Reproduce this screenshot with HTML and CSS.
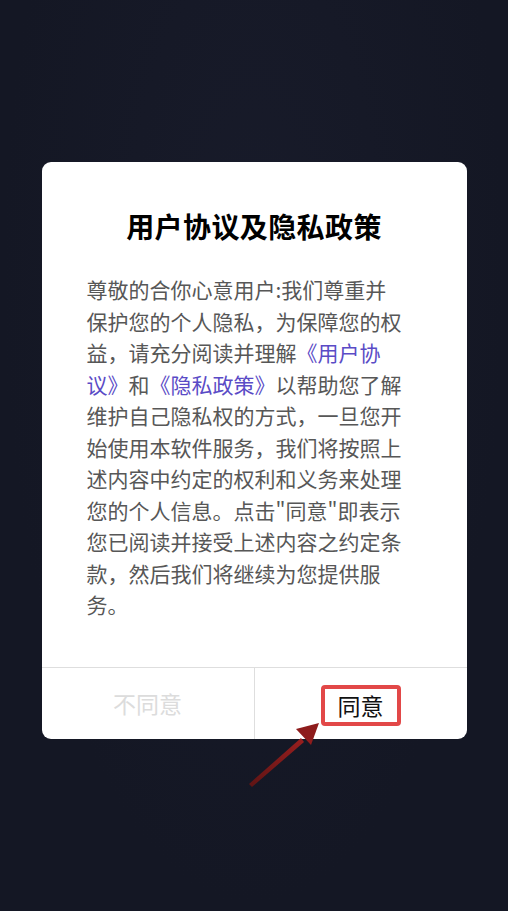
FILE: index.html
```html
<!DOCTYPE html>
<html lang="zh-CN">
<head>
<meta charset="utf-8">
<title>用户协议及隐私政策</title>
<link rel="stylesheet" href="styles.css">
</head>
<body>
<div class="screen">
  <div class="dialog">
    <div class="content">
      <h1 class="title">用户协议及隐私政策</h1>
      <p class="body">尊敬的合你心意用户:我们尊重并<br>保护您的个人隐私，为保障您的权<br>益，请充分阅读并理解<span class="link">《用户协<br>议》</span>和<span class="link">《隐私政策》</span>以帮助您了解<br>维护自己隐私权的方式，一旦您开<br>始使用本软件服务，我们将按照上<br>述内容中约定的权利和义务来处理<br>您的个人信息。点击"同意"即表示<br>您已阅读并接受上述内容之约定条<br>款，然后我们将继续为您提供服<br>务。</p>
    </div>
    <div class="actions">
      <div class="btn btn-no">不同意</div>
      <div class="btn btn-yes"><span class="mark">同意</span></div>
    </div>
  </div>
  <svg class="arrow" width="90" height="80" viewBox="0 0 90 80">
    <defs>
      <linearGradient id="ag" x1="0" y1="1" x2="1" y2="0">
        <stop offset="0" stop-color="#5e1414"/>
        <stop offset="1" stop-color="#9a1f1f"/>
      </linearGradient>
    </defs>
    <path d="M6 72 L58 26 L61 30 L9 75 Z" fill="url(#ag)"/>
    <path d="M76 11 L53 17 L68 33 Z" fill="#8e1c1c"/>
  </svg>
</div>
</body>
</html>
```
FILE: styles.css
```css
html, body {
  margin: 0;
  padding: 0;
}
body {
  background: #151826;
  font-family: "Noto Sans CJK SC", "Noto Sans", sans-serif;
}
.screen {
  position: relative;
  width: 508px;
  height: 911px;
  overflow: hidden;
  padding-top: 162px;
  box-sizing: border-box;
  background: radial-gradient(ellipse at 50% 30%, #181b2a 0%, #141724 70%);
}
.dialog {
  width: 425px;
  margin: 0 auto;
  background: #ffffff;
  border-radius: 9px;
  overflow: hidden;
}
.content {
  padding: 46px 45px 46px 45px;
}
.title {
  margin: 0;
  text-align: center;
  font-size: 28px;
  line-height: 36px;
  font-weight: 700;
  color: #000;
  letter-spacing: 0.4px;
}
.body {
  margin: 30px 0 0 0;
  font-size: 21px;
  line-height: 31.5px;
  color: #575757;
  white-space: nowrap;
}
.link {
  color: #5a4bc6;
}
.actions {
  display: flex;
  border-top: 1px solid #dedede;
  height: 71px;
}
.btn {
  flex: 1;
  display: flex;
  align-items: center;
  justify-content: center;
  font-size: 23px;
}
.btn-no {
  color: #dcdcdc;
  border-right: 1px solid #dedede;
}
.btn-yes {
  color: #111;
}
.mark {
  border: 4px solid #e24848;
  border-radius: 4px;
  padding: 0 13px;
  line-height: 33px;
  margin-top: 4px;
}
.arrow {
  position: absolute;
  left: 243px;
  top: 712px;
}
```
